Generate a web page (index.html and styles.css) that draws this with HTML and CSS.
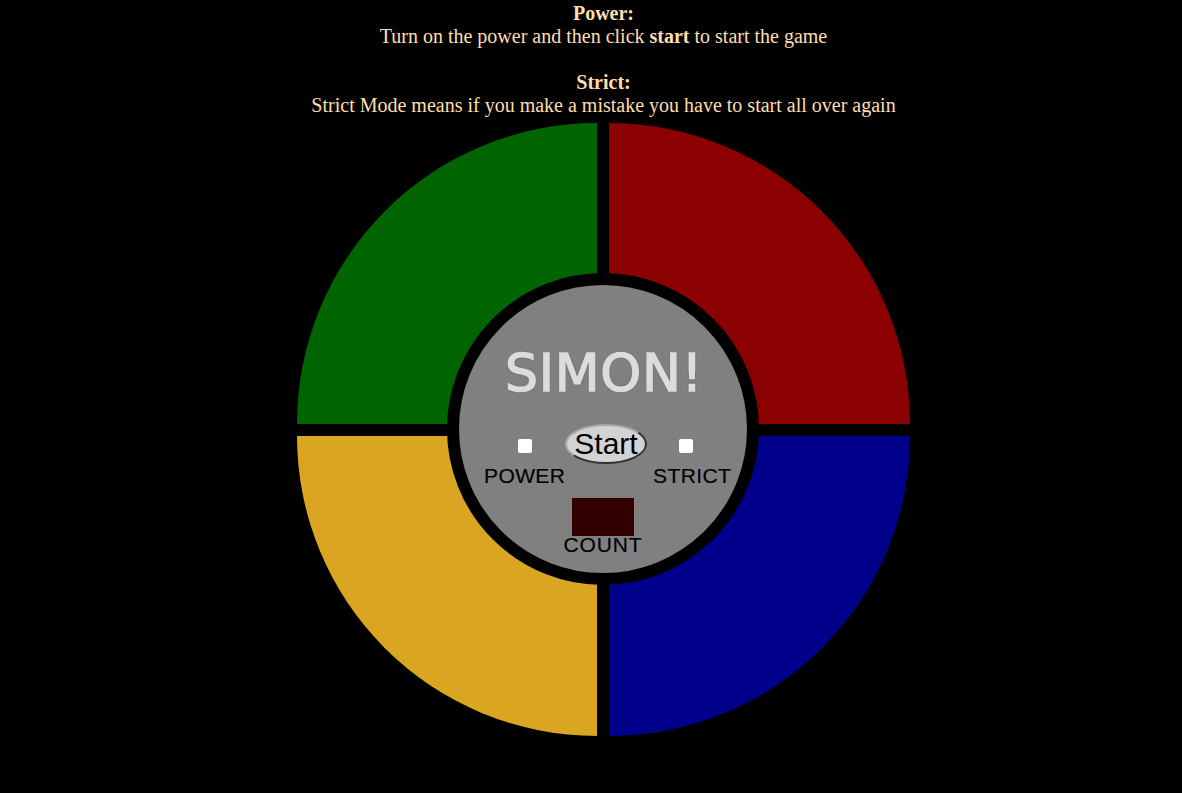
FILE: index.html
```html
<!DOCTYPE html>
<html lang="en">
  <head>
    <meta charset="utf-8">
    <meta name="viewport" content="width=device-width, initial-scale=1.0">
    <title>Simon</title>
    <link rel="stylesheet" href="styles.css">
  </head>
  <body>
    <main class="game">
      <section class="rules">
        <p><b>Power:</b><br>Turn on the power and then click <b>start</b> to start the game</p>
        <p><b>Strict:</b><br>Strict Mode means if you make a mistake you have to start all over again</p>
      </section>
      <div class="board">
        <div class="pad green"></div>
        <div class="pad red"></div>
        <div class="pad yellow"></div>
        <div class="pad blue"></div>
        <div class="hub">
          <h1 class="title">SIMON!</h1>
          <div class="controls">
            <label class="switch power">
              <input type="checkbox">
              <span>POWER</span>
            </label>
            <button type="button" class="start">Start</button>
            <label class="switch strict">
              <input type="checkbox">
              <span>STRICT</span>
            </label>
          </div>
          <div class="count">
            <div class="count-screen"></div>
            <span>COUNT</span>
          </div>
        </div>
      </div>
    </main>
  </body>
</html>
```

FILE: styles.css
```css
body {
  margin: 0;
  background-color: black;
  color: #ffdead;
  font-family: "Liberation Serif", serif;
  font-size: 20px;
  line-height: 23px;
}

.game {
  width: 613px;
  margin-left: 297px;
  height: 793px;
}

.rules {
  height: 123px;
  padding-top: 2px;
  box-sizing: border-box;
  text-align: center;
  white-space: nowrap;
}

.rules p {
  margin: 0 0 23px;
}

.board {
  position: relative;
  width: 613px;
  height: 613px;
  display: grid;
  grid-template-columns: 300px 301px;
  grid-template-rows: 301px 300px;
  gap: 12px;
}

.pad.green {
  background-color: #006400;
  border-top-left-radius: 100%;
}

.pad.red {
  background-color: #8b0000;
  border-top-right-radius: 100%;
}

.pad.yellow {
  background-color: #daa520;
  border-bottom-left-radius: 100%;
}

.pad.blue {
  background-color: #00008b;
  border-bottom-right-radius: 100%;
}

.hub {
  position: absolute;
  left: 150px;
  top: 150px;
  width: 288px;
  height: 288px;
  border: 12px solid black;
  border-radius: 50%;
  background-color: #808080;
  color: black;
  display: flex;
  flex-direction: column;
  align-items: center;
}

.title {
  margin: 60px 0 0 2px;
  height: 56px;
  color: #dcdcdc;
  font-family: "Comic Sans MS", "DejaVu Sans", cursive;
  font-size: 52px;
  font-weight: normal;
  letter-spacing: 0.7px;
  line-height: 56px;
  -webkit-text-stroke: 1.5px #dcdcdc;
  text-shadow: 0 0 2px #333;
}

.controls {
  box-sizing: border-box;
  width: 100%;
  margin-top: 23px;
  padding-left: 25px;
  display: flex;
  align-items: flex-start;
}

.switch {
  display: flex;
  flex-direction: column;
  align-items: flex-start;
  font-family: "Liberation Sans", sans-serif;
  font-size: 21px;
  letter-spacing: 0.4px;
  line-height: 24px;
  white-space: nowrap;
  -webkit-text-stroke: 0.2px black;
}

.switch input {
  appearance: none;
  width: 14px;
  height: 14px;
  margin: 15px 0 11px;
  border-radius: 2px;
  background-color: white;
}

.power {
  width: 81px;
}

.power input {
  margin-left: 34px;
}

.strict {
  width: 78px;
  margin-left: 6px;
}

.strict input {
  margin-left: 26px;
}

.start {
  width: 82px;
  height: 40px;
  padding: 0;
  border: 2px solid;
  border-color: #a8a8a8 #333 #333 #a8a8a8;
  border-radius: 50%;
  background-color: #d3d3d3;
  color: black;
  font-family: "Liberation Sans", sans-serif;
  font-size: 30px;
  line-height: 30px;
}

.count {
  margin: 10px 0 0;
  display: flex;
  flex-direction: column;
  align-items: center;
  font-family: "Liberation Sans", sans-serif;
  font-size: 21px;
  letter-spacing: 0.9px;
  line-height: 18px;
  -webkit-text-stroke: 0.2px black;
}

.count-screen {
  width: 62px;
  height: 38px;
  background-color: #300;
}
```
